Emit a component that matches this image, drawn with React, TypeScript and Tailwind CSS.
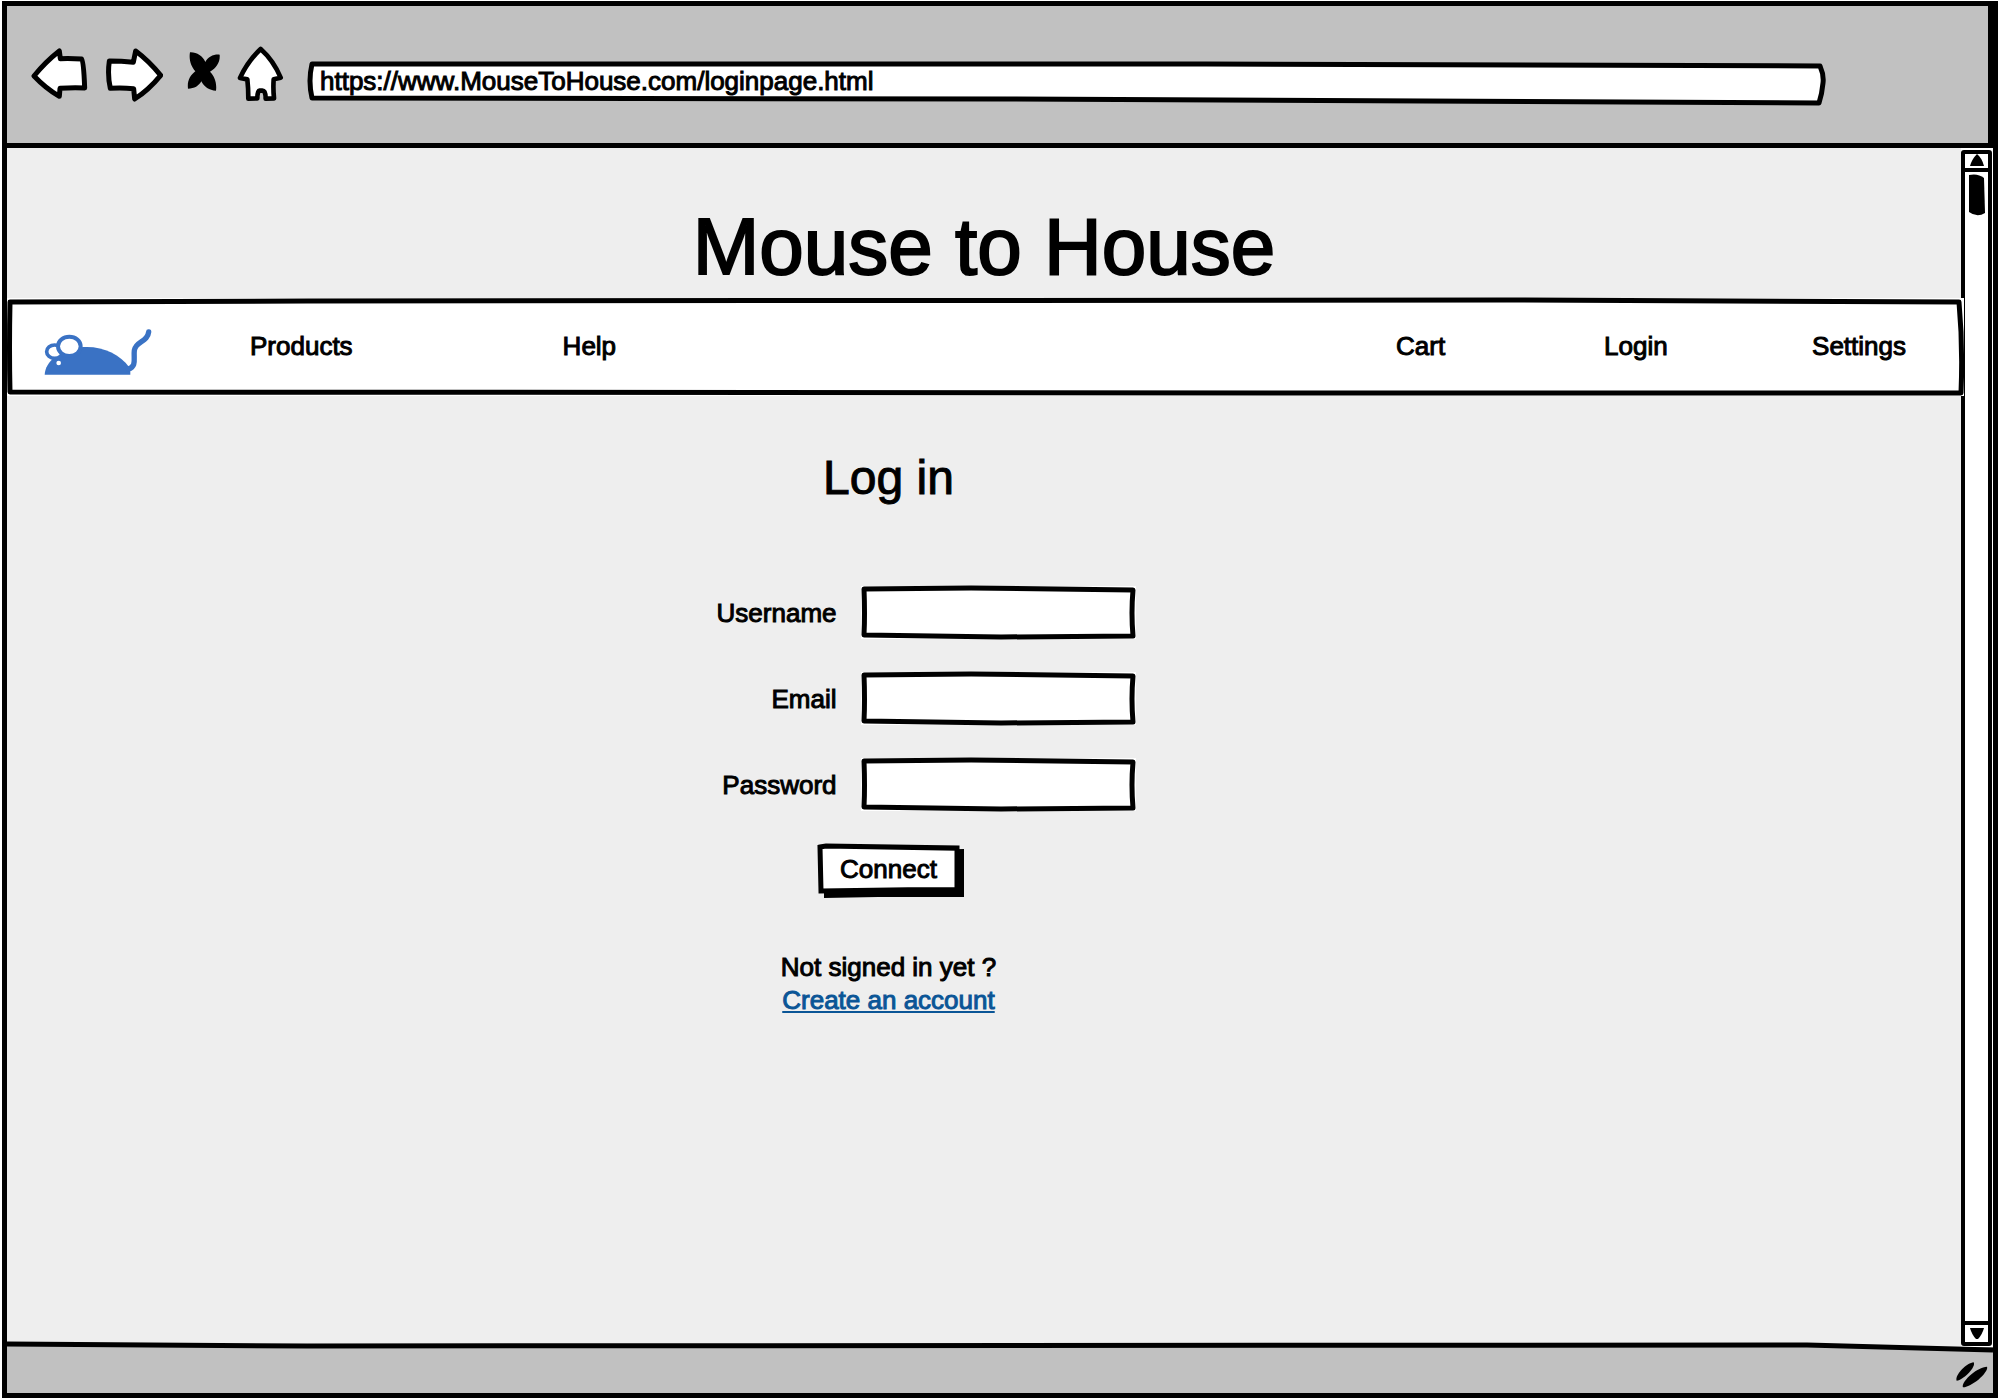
import React from "react";

type OutlineProps = { box: string; d: string; fill?: string };

/** Hand-drawn outline stretched over its (relative) parent. */
function Outline({ box, d, fill = "none" }: OutlineProps) {
  return (
    <svg
      aria-hidden="true"
      viewBox={box}
      preserveAspectRatio="none"
      className="pointer-events-none absolute inset-0 h-full w-full overflow-visible"
    >
      <path
        d={d}
        fill={fill}
        stroke="#000"
        strokeWidth="5"
        strokeLinejoin="round"
        vectorEffect="non-scaling-stroke"
      />
    </svg>
  );
}

function BackIcon() {
  return (
    <svg viewBox="93 133 171 174" className="block h-[58px] w-[57px]">
      <path
        d="M102 226 Q136 184 178 151 L181 174 Q214 173 245 175 Q251 178 254 262 Q220 260 180 263 L178 287 Q138 264 102 226Z"
        fill="#fff"
        stroke="#000"
        strokeWidth="15"
        strokeLinejoin="round"
      />
    </svg>
  );
}

function ForwardIcon() {
  return (
    <svg viewBox="315 133 174 174" className="block h-[58px] w-[58px]">
      <path
        d="M328 181 Q364 181 400 185 L407 151 Q446 180 482 224 Q446 268 404 295 L401 264 Q366 261 331 263 Q322 224 328 181Z"
        fill="#fff"
        stroke="#000"
        strokeWidth="15"
        strokeLinejoin="round"
      />
    </svg>
  );
}

function StopIcon() {
  return (
    <svg viewBox="540 133 120 174" className="block h-[58px] w-10">
      <path d="M570 155 C590 154 608 166 616 184 C624 168 642 160 659 162 C661 184 650 202 630 213 C644 226 651 248 648 270 C628 270 612 258 604 242 C596 256 584 264 564 264 C561 242 570 224 586 212 C573 198 566 176 570 155Z" />
    </svg>
  );
}

function HomeIcon() {
  return (
    <svg viewBox="710 133 141 174" className="block h-[58px] w-[47px]">
      <path
        d="M781 145 Q820 180 841 231 L820 236 Q818 264 821 293 L796 294 Q796 270 786 270 L778 270 Q771 271 771 293 L744 294 Q744 262 741 236 L719 232 Q742 182 781 145Z"
        fill="#fff"
        stroke="#000"
        strokeWidth="14"
        strokeLinejoin="round"
      />
    </svg>
  );
}

function MouseLogo() {
  return (
    <svg viewBox="131 148 324 141" className="block h-[47px] w-[108px]" role="img" aria-label="Mouse to House">
      <path
        d="M133 285 C134 264 146 246 162 234 L240 203 C300 196 358 222 386 262 L390 275 L390 285Z"
        fill="#3a72c4"
      />
      <path
        d="M384 268 C410 260 399 236 402 212 C406 184 442 188 445 157"
        fill="none"
        stroke="#3a72c4"
        strokeWidth="16"
        strokeLinecap="round"
      />
      <ellipse cx="163" cy="216" rx="24" ry="20" fill="#fff" stroke="#3a72c4" strokeWidth="11" />
      <ellipse cx="207" cy="200" rx="34" ry="29" fill="#fff" stroke="#3a72c4" strokeWidth="12" />
      <circle cx="175" cy="250" r="7" fill="#fff" />
    </svg>
  );
}

function BrowserBar() {
  return (
    <header className="flex h-[142px] items-start border-r-[5px] border-b-[5px] border-black bg-[#c1c1c1] pt-[39px] pr-[163px] pl-6">
      <div className="flex gap-[17px]">
        <button type="button" aria-label="Back"><BackIcon /></button>
        <button type="button" aria-label="Forward"><ForwardIcon /></button>
        <button type="button" aria-label="Stop"><StopIcon /></button>
        <button type="button" aria-label="Home"><HomeIcon /></button>
      </div>
      <div className="relative mt-4 ml-6 h-11 flex-1">
        <Outline
          box="0 0 1520 44"
          d="M4 3 L900 3 L1515 5 Q1519 14 1518 22 Q1517 33 1514 42 L700 38 L4 37 Q0 20 4 3Z"
          fill="#fff"
        />
        <input
          type="text"
          aria-label="Address"
          defaultValue="https://www.MouseToHouse.com/loginpage.html"
          className="relative block h-10 w-full bg-transparent px-3 text-[26px] outline-none [-webkit-text-stroke:1px]"
        />
      </div>
    </header>
  );
}

function SiteNav() {
  return (
    <nav className="relative z-10 -mr-[3px] flex h-[98px] items-center bg-white pr-[58px] pb-[2px] pl-[37px]">
      <Outline
        box="0 0 1957 98"
        d="M3 4 L300 3 L1500 2 L1952 4 Q1956 48 1954 95 L1400 95 L3 94 Q2 50 3 4Z"
      />
      <a href="#home" className="relative mt-3"><MouseLogo /></a>
      <ul className="relative ml-[98px] flex gap-[210px]">
        <li><a href="#products">Products</a></li>
        <li><a href="#help">Help</a></li>
      </ul>
      <ul className="relative ml-auto flex">
        <li className="w-[208px]"><a href="#cart">Cart</a></li>
        <li className="w-[208px]"><a href="#login">Login</a></li>
        <li><a href="#settings">Settings</a></li>
      </ul>
    </nav>
  );
}

function Field({ id, label, type }: { id: string; label: string; type: string }) {
  return (
    <>
      <label htmlFor={id} className="pt-[2px] text-right">{label}</label>
      <div className="relative h-[53px] bg-white">
        <Outline
          box="0 0 275 53"
          d="M3 3 L110 2 L272 4 Q270 27 272 50 L140 51 L3 49 Q4 28 3 3Z"
        />
        <input id={id} type={type} className="relative block h-full w-full bg-transparent px-3 outline-none" />
      </div>
    </>
  );
}

function LoginForm() {
  return (
    <section className="flex flex-col items-center pt-[58px] pr-[191px]">
      <h2 className="text-[48px] leading-[48px]">Log in</h2>
      <form className="mt-[84px] flex flex-col items-center" onSubmit={(e) => e.preventDefault()}>
        <div className="grid w-[550px] grid-cols-[223px_275px] items-center gap-x-6 gap-y-[33px]">
          <Field id="username" label="Username" type="text" />
          <Field id="email" label="Email" type="email" />
          <Field id="password" label="Password" type="password" />
        </div>
        <button type="submit" className="relative mt-[33px] h-[50px] w-[141px]">
          <svg
            aria-hidden="true"
            viewBox="0 0 141 49"
            preserveAspectRatio="none"
            className="absolute inset-0 h-full w-full overflow-visible"
          >
            <path d="M6 8 L146 5 L146 52 L60 52 L6 53Z" />
            <path d="M2 3 L8 2 L139 4 L139 45 L90 45 L3 46Z" fill="#fff" stroke="#000" strokeWidth="5" />
          </svg>
          <span className="relative">Connect</span>
        </button>
      </form>
      <p className="mt-[57px] text-center">
        Not signed in yet ?
        <br />
        <a href="#register" className="text-[#0a5596] underline decoration-2 underline-offset-2">
          Create an account
        </a>
      </p>
    </section>
  );
}

function Scrollbar() {
  return (
    <aside aria-label="Scrollbar" className="flex w-8 flex-col bg-white pr-px pb-px">
      <div className="mt-[2px] flex flex-1 flex-col rounded-[3px] border-t-[4px] border-r-[4px] border-b-[4px] border-l-[4px] border-black">
        <button type="button" aria-label="Scroll up" className="flex h-[18px] justify-center border-b-[4px] border-black">
          <svg viewBox="0 0 14 12" className="block h-3 w-[14px]"><path d="M0 12 Q2 5 7 0 Q12 4 14 12Z" /></svg>
        </button>
        <svg viewBox="0 0 16 42" className="mt-[2px] ml-1 block h-[42px] w-4">
          <path d="M0 1 Q9 -1 15 4 L16 39 Q8 44 0 38Z" />
        </svg>
        <button type="button" aria-label="Scroll down" className="mt-auto flex h-[21px] items-center justify-center border-t-[4px] border-black">
          <svg viewBox="0 0 14 11" className="block h-[11px] w-[14px]"><path d="M0 0 L14 0 Q12 7 8 11 L6 11 Q2 7 0 0Z" /></svg>
        </button>
      </div>
    </aside>
  );
}

function StatusBar() {
  return (
    <footer className="relative flex h-[46px] items-end justify-end bg-[#c1c1c1] pr-[5px] pb-[5px]">
      <svg
        aria-hidden="true"
        viewBox="0 0 1986 12"
        preserveAspectRatio="none"
        className="absolute -top-[6px] left-0 h-3 w-full"
      >
        <path d="M0 3 L300 5 L1800 4 L1986 9 L1986 12 L0 12Z" fill="#c1c1c1" />
        <path d="M0 3 L300 5 L1800 4 L1986 9" fill="none" stroke="#000" strokeWidth="5" vectorEffect="non-scaling-stroke" />
      </svg>
      <svg aria-hidden="true" viewBox="231 247 96 78" className="relative block h-[26px] w-8">
        <path d="M233 303 C226 288 262 250 284 248 C292 260 256 300 233 303Z" />
        <path d="M252 323 C244 308 292 263 324 261 C330 276 282 320 252 323Z" />
      </svg>
    </footer>
  );
}

export default function App() {
  return (
    <div className="flex min-h-screen flex-col bg-white px-[2px] pt-px pb-[2px] font-['Liberation_Sans',Arial,sans-serif] text-[26px] leading-[33px] text-black">
      <div className="flex flex-1 flex-col border-[5px] border-black">
        <BrowserBar />
        <div className="flex flex-1">
          <main className="min-w-0 flex-1 bg-[#eee] [-webkit-text-stroke:1px]">
            <h1 className="pt-[59px] pb-[11px] text-center text-[80px] leading-[80px] [-webkit-text-stroke:2px]">
              Mouse to House
            </h1>
            <SiteNav />
            <LoginForm />
          </main>
          <Scrollbar />
        </div>
        <StatusBar />
      </div>
    </div>
  );
}
